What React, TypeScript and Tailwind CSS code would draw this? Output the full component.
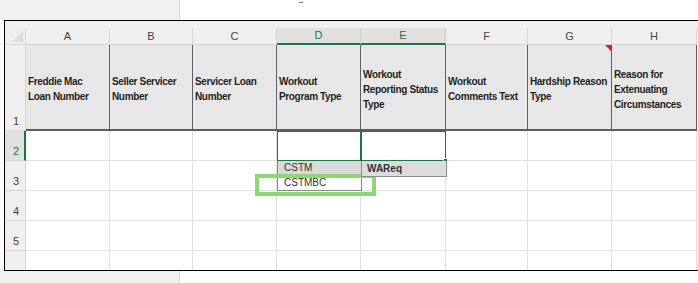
import React from "react";

const cols = [
  { key: "A", w: "w-[84px]", lines: ["Freddie Mac", "Loan Number"] },
  { key: "B", w: "w-[83px]", lines: ["Seller Servicer", "Number"] },
  { key: "C", w: "w-[84px]", lines: ["Servicer Loan", "Number"] },
  { key: "D", w: "w-[84px]", lines: ["Workout", "Program Type"] },
  { key: "E", w: "w-[85px]", lines: ["Workout", "Reporting Status", "Type"] },
  { key: "F", w: "w-[82px]", lines: ["Workout", "Comments Text"] },
  { key: "G", w: "w-[84px]", lines: ["Hardship Reason", "Type"] },
  { key: "H", w: "w-[85px]", lines: ["Reason for", "Extenuating", "Circumstances"] },
];

const sel = (k: string) => k === "D" || k === "E";

function ColumnHeaders() {
  return (
    <div className="flex h-[17px]">
      <div className="w-[21px] shrink-0 border-r border-b border-[#d6d6d6] bg-[#efefef] flex items-end justify-end p-[2px]">
        <div className="w-0 h-0 border-l-[11px] border-l-transparent border-b-[11px] border-b-[#dcdcdc]" />
      </div>
      {cols.map((c) => (
        <div
          key={c.key}
          className={`${c.w} shrink-0 flex items-center justify-center border-r text-[11px] ${
            sel(c.key)
              ? "bg-[#e1e1e1] text-[#217346] border-b-2 border-b-[#217346] border-r-[#cfcfcf]"
              : "bg-[#efefef] text-[#444] border-b border-b-[#d6d6d6] border-r-[#d6d6d6]"
          }`}
        >
          {c.key}
        </div>
      ))}
    </div>
  );
}

function RowHeader({ n, h, active }: { n: string; h: string; active?: boolean }) {
  return (
    <div
      className={`w-[21px] shrink-0 ${h} flex items-end pl-[8px] pb-[1px] text-[11px] border-b border-[#d6d6d6] ${
        active ? "bg-[#e1e1e1] text-[#217346] border-r-2 border-r-[#217346]" : "bg-[#efefef] text-[#444] border-r border-r-[#d6d6d6]"
      }`}
    >
      {n}
    </div>
  );
}

function TitleRow() {
  return (
    <div className="flex h-[86px]">
      <RowHeader n="1" h="h-[86px]" />
      {cols.map((c) => (
        <div
          key={c.key}
          className={`${c.w} shrink-0 relative bg-[#e7e7e7] border-r border-r-[#5f5f5f] border-b-2 border-b-[#5f5f5f] flex flex-col justify-center pl-[2px] pt-[4px] font-bold text-[10px] tracking-[-0.35px] leading-[15px] text-[#1f1f1f]`}
        >
          {c.lines.map((l) => (
            <span key={l} className="whitespace-nowrap">
              {l}
            </span>
          ))}
          {c.key === "G" && (
            <div className="absolute top-0 right-0 w-0 h-0 border-l-[6px] border-l-transparent border-t-[6px] border-t-[#e81123]" />
          )}
        </div>
      ))}
    </div>
  );
}

function BodyRow({ n, h, active }: { n: string; h: string; active?: boolean }) {
  return (
    <div className={`flex ${h}`}>
      <RowHeader n={n} h={h} active={active} />
      {cols.map((c) => (
        <div
          key={c.key}
          className={`${c.w} shrink-0 relative border-r border-b ${
            active && sel(c.key) ? "border-[#217346] border-[1.5px]" : "border-[#e1e1e1]"
          } bg-white`}
        >
          {active && c.key === "D" && (
            <div className="absolute left-[-1px] top-full mt-[1px] w-[85px] z-10 text-[10px] leading-[14px] text-[#333]">
              <div className="h-[14px] bg-[#d9d9d9] border-l border-r border-[#8a8a8a] pl-[6px]">CSTM</div>
              <div className="h-[16px] bg-white border border-t-0 border-[#8a8a8a] pl-[6px] leading-[15px]">CSTMBC</div>
            </div>
          )}
          {active && c.key === "E" && (
            <>
              <div className="absolute left-[-1px] top-full mt-[1px] w-[86px] h-[16px] z-30 bg-[#dcdcdc] border border-t-0 border-[#8a8a8a] pl-[5px] text-[10px] font-semibold leading-[15px] text-[#333]">
                WAReq
              </div>
              <div className="absolute right-[-3px] bottom-[-3px] w-[5px] h-[5px] bg-[#217346] border border-white z-20" />
            </>
          )}
        </div>
      ))}
    </div>
  );
}

export default function App() {
  return (
    <div className="w-[698px] h-[283px] bg-white overflow-hidden flex flex-col font-['Liberation_Sans',Arial,sans-serif]">
      <div className="h-[20px] flex shrink-0">
        <div className="w-[180px] bg-[#f0f0f0] border-r border-[#dadada]" />
        <div className="flex-1 relative">
          <div className="absolute left-[119px] top-[2px] w-[4px] h-px bg-[#888]" />
        </div>
      </div>
      <div className="relative ml-[4px] h-[251px] shrink-0 border-t border-l border-b border-black bg-[#f0f0f0] pt-[7px] overflow-hidden">
        <ColumnHeaders />
        <TitleRow />
        <BodyRow n="2" h="h-[30px]" active />
        <BodyRow n="3" h="h-[30px]" />
        <BodyRow n="4" h="h-[30px]" />
        <BodyRow n="5" h="h-[30px]" />
        <BodyRow n="" h="h-[30px]" />
        <div className="absolute left-[250px] top-[153px] w-[121px] h-[22px] border-[4px] border-[#8fd774] z-20 pointer-events-none" />
      </div>
      <div className="flex-1 flex">
        <div className="w-[180px] bg-[#f0f0f0] border-r border-[#dadada]" />
      </div>
    </div>
  );
}
